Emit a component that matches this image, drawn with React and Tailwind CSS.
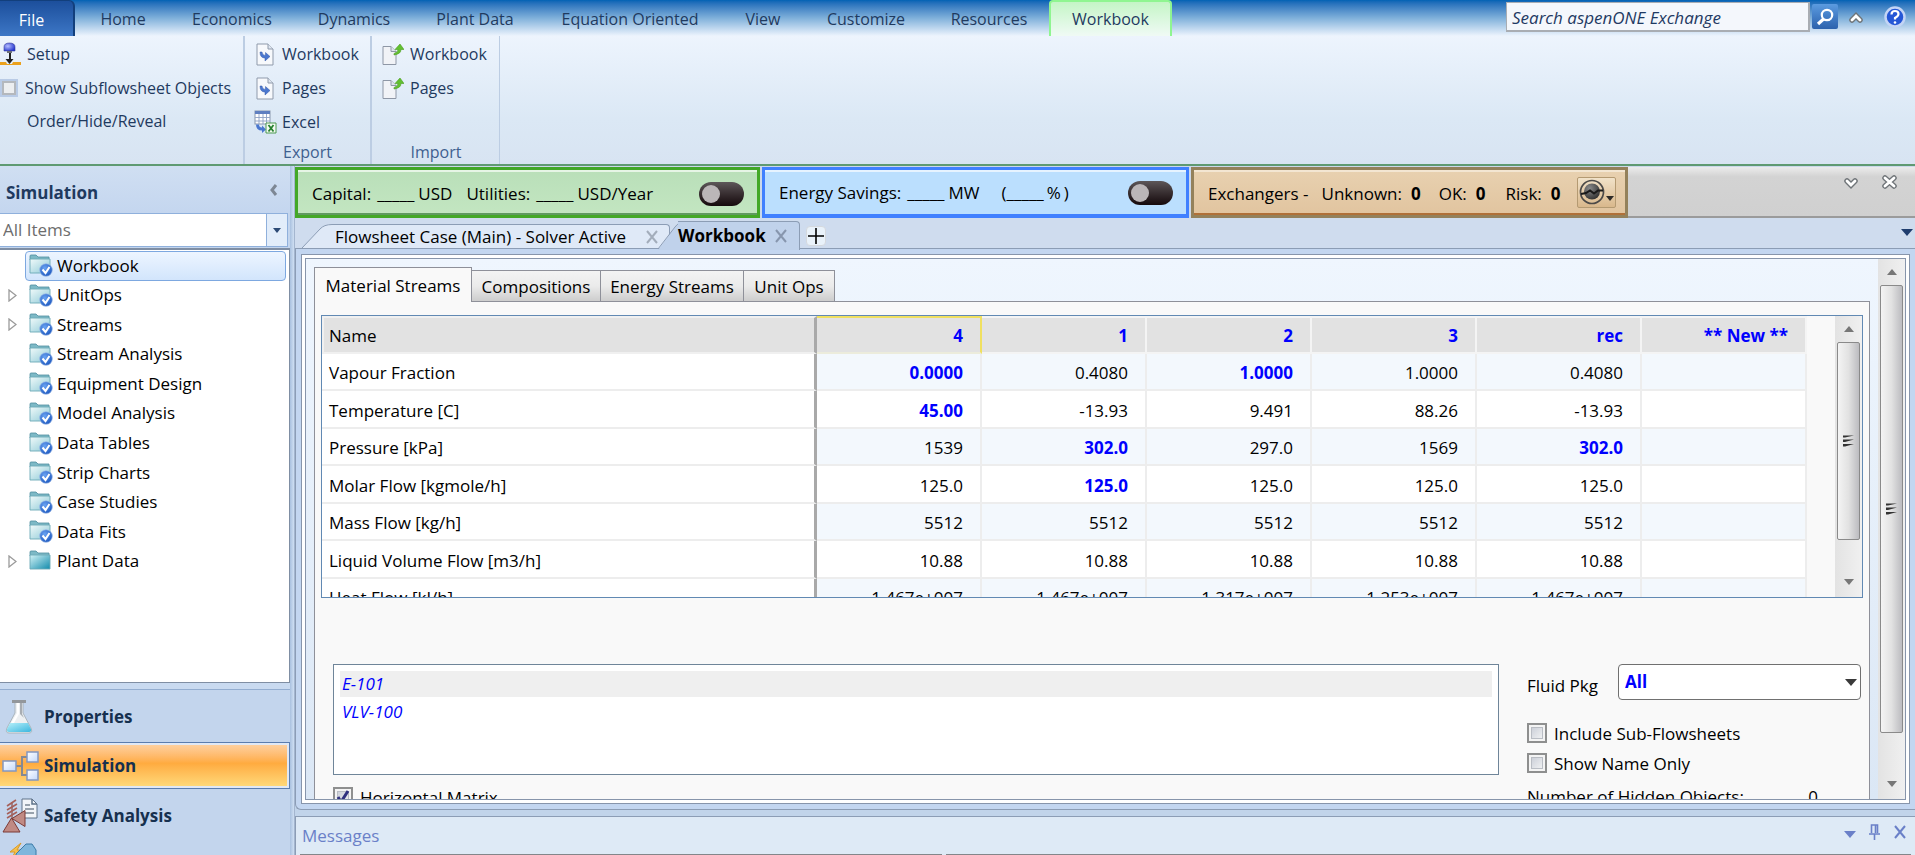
import { useState } from "react";

const ribbonTabs = [
  { name: "Home", width: "w-[92px]" },
  { name: "Economics", width: "w-[126px]" },
  { name: "Dynamics", width: "w-[118px]" },
  { name: "Plant Data", width: "w-[124px]" },
  { name: "Equation Oriented", width: "w-[186px]" },
  { name: "View", width: "w-[80px]" },
  { name: "Customize", width: "w-[126px]" },
  { name: "Resources", width: "w-[120px]" },
];

const treeItems = [
  { name: "Workbook", selected: true },
  { name: "UnitOps", expandable: true },
  { name: "Streams", expandable: true },
  { name: "Stream Analysis" },
  { name: "Equipment Design" },
  { name: "Model Analysis" },
  { name: "Data Tables" },
  { name: "Strip Charts" },
  { name: "Case Studies" },
  { name: "Data Fits" },
  { name: "Plant Data", expandable: true, plain: true },
];

const columns = ["4", "1", "2", "3", "rec", "** New **"];

// values that start with "!" are user specified and drawn in blue
const rows = [
  ["Vapour Fraction", "!0.0000", "0.4080", "!1.0000", "1.0000", "0.4080", ""],
  ["Temperature [C]", "!45.00", "-13.93", "9.491", "88.26", "-13.93", ""],
  ["Pressure [kPa]", "1539", "!302.0", "297.0", "1569", "!302.0", ""],
  ["Molar Flow [kgmole/h]", "125.0", "!125.0", "125.0", "125.0", "125.0", ""],
  ["Mass Flow [kg/h]", "5512", "5512", "5512", "5512", "5512", ""],
  ["Liquid Volume Flow [m3/h]", "10.88", "10.88", "10.88", "10.88", "10.88", ""],
  [
    "Heat Flow [kJ/h]",
    "-1.467e+007",
    "-1.467e+007",
    "-1.317e+007",
    "-1.253e+007",
    "-1.467e+007",
    "",
  ],
];

function SetupIcon() {
  return (
    <svg width="22" height="24" viewBox="0 0 22 24" className="shrink-0">
      <defs>
        <radialGradient id="bulb" cx=".35" cy=".4" r=".7">
          <stop offset="0" stopColor="#b4bcff" />
          <stop offset="1" stopColor="#2233cc" />
        </radialGradient>
      </defs>
      <path d="M5 9V5q0-4 5.500-4T16 5v4z" fill="url(#bulb)" stroke="#3a3f9a" strokeWidth=".6" />
      <path d="M8 9h5v2H8z" fill="#6d7078" />
      <path d="M10 11h2v7h-2z" fill="#222" />
      <path d="M6.500 17h8L10.500 22z" fill="#222" />
      <path d="M0 20h7l1 2h5l1-2h8v3H0z" fill="#eba11c" />
    </svg>
  );
}

function ExportPageIcon() {
  return (
    <svg width="18" height="23" viewBox="0 0 18 23">
      <path d="M1 1h11l5 5v16H1z" fill="#f7f9fc" stroke="#8f9aab" />
      <path d="M12 1v5h5" fill="#dfe6f0" stroke="#8f9aab" />
      <path d="M4 9q0 6 5 6v3l5-4.500L9.500 9.500v3Q6.500 12.500 6 9z" fill="#4a77cf" stroke="#3459a8" strokeWidth=".5" />
    </svg>
  );
}

function ImportPageIcon() {
  return (
    <svg width="22" height="22" viewBox="0 0 22 22" className="shrink-0">
      <path d="M1 3.500h8l5 5v13H1z" fill="#f1f3f7" stroke="#8e97a6" />
      <path d="M9 3.500v5h5" fill="#dfe4ec" stroke="#8e97a6" />
      <path d="M12 10.500q4-1 4-4h-3l5-5.500 4 5.500h-3q0 4.500-7 5.500z" fill="#62c030" stroke="#4d9c22" strokeWidth=".6" />
    </svg>
  );
}

function ExcelIcon() {
  return (
    <svg width="23" height="24" viewBox="0 0 23 24" className="shrink-0">
      <rect x="1" y="1" width="15" height="13" fill="#fff" stroke="#8a97ad" />
      <rect x="1" y="1" width="15" height="3" fill="#5f7fc0" />
      <path d="M1 7.500h15M1 11h15M5 4v10M9 4v10M12.500 4v10" stroke="#8fa2c4" strokeWidth=".9" />
      <path d="M2 14.500h3q0 3 3 3v-2l4 4-4 3.500v-2.500q-6 0-6-6z" fill="#4a77cf" />
      <path d="M12 13h10v10H12z" fill="#f4faf2" stroke="#4c9a50" />
      <path d="M14.500 15l5 6.500M19.500 15l-5 6.500" stroke="#26802c" strokeWidth="1.800" />
    </svg>
  );
}

function FolderIcon({ plain }) {
  return (
    <svg width="24" height="23" viewBox="0 0 24 23" className="shrink-0">
      <defs>
        <linearGradient id="folder" x1="0" y1="0" x2="1" y2="1">
          <stop offset="0" stopColor="#f1fafa" />
          <stop offset="1" stopColor="#8cc9d6" />
        </linearGradient>
        <linearGradient id="folderDark" x1="0" y1="0" x2="1" y2="1">
          <stop offset="0" stopColor="#d3f3f6" />
          <stop offset="1" stopColor="#128bac" />
        </linearGradient>
        <radialGradient id="badge" cx=".4" cy=".35" r=".7">
          <stop offset="0" stopColor="#6ba4f2" />
          <stop offset="1" stopColor="#1a55be" />
        </radialGradient>
      </defs>
      <path d="M1 2q0-1 1-1h5l2 2h11v3H1z" fill="#7db9c6" stroke="#4e8d9e" strokeWidth=".8" />
      <path
        d="M1 5h20v14H1z"
        fill={plain ? "url(#folderDark)" : "url(#folder)"}
        stroke="#6ba9b7"
        strokeWidth=".9"
      />
      {!plain && (
        <>
          <circle cx="17" cy="16" r="6.300" fill="url(#badge)" stroke="#9dbbe8" strokeWidth=".7" />
          <path d="M13.500 15.500l3 3.500 4-6" fill="none" stroke="#fff" strokeWidth="2" />
        </>
      )}
    </svg>
  );
}

function FlaskIcon() {
  return (
    <svg width="30" height="34" viewBox="0 0 30 34">
      <defs>
        <linearGradient id="water" x1="0" y1="0" x2="1" y2="1">
          <stop offset="0" stopColor="#b6f0fa" />
          <stop offset="1" stopColor="#3bb6de" />
        </linearGradient>
      </defs>
      <path d="M11 2v11L3 28q-2 5 2 5h20q4 0 2-5L19 13V2z" fill="#edf0f2" stroke="#aab4bc" />
      <path d="M6 23h18l3 6q1 3-2 3H5q-3 0-2-3z" fill="url(#water)" />
      <path d="M13 3h2v11l-5 9H7l6-10z" fill="#fff" />
      <path d="M16 3h2v11l2 4-4-4z" fill="#a8adb2" />
      <rect x="8" y="0" width="14" height="3" fill="#93979b" />
    </svg>
  );
}

function SimulationIcon() {
  return (
    <svg width="38" height="30" viewBox="0 0 38 30">
      <defs>
        <linearGradient id="block" x1="0" y1="0" x2="1" y2="1">
          <stop offset="0" stopColor="#fff" />
          <stop offset="1" stopColor="#c3d8fb" />
        </linearGradient>
      </defs>
      <path d="M14 15h6M26 6h-6v18h6" fill="none" stroke="#858993" strokeWidth="2" />
      <g fill="url(#block)" stroke="#8397c0" strokeWidth="1.500">
        <rect x="1" y="10" width="13" height="10" />
        <rect x="25" y="1" width="11" height="10" />
        <rect x="25" y="19" width="11" height="10" />
      </g>
    </svg>
  );
}

function SafetyIcon() {
  return (
    <svg width="37" height="36" viewBox="0 0 37 36">
      <path d="M20 1h10l5 5v14H20z" fill="#f2f5f9" stroke="#5f7389" />
      <path d="M30 1v5h5" fill="none" stroke="#5f7389" strokeWidth="1.500" />
      <path d="M23 7h5M23 11h9M23 15h9" stroke="#7b8794" strokeWidth="1.500" />
      <path d="M10 22V4" stroke="#8a4a45" strokeWidth="1.200" />
      <path d="M5 20l10-6M5 16l10-6M5 12l10-6M5 8l9-6" stroke="#a5605a" strokeWidth="1.600" />
      <path d="M9.500 20L1 34h17z" fill="#c08a84" stroke="#7c3b37" />
      <path d="M10 20.500l13-8v16z" fill="#c08a84" stroke="#7c3b37" />
    </svg>
  );
}

function EnergyIcon() {
  return (
    <svg width="32" height="32" viewBox="0 0 32 32">
      <path d="M13 1L2 10h5L2 20 14 8H9z" fill="#f6c04a" stroke="#d79a2a" />
      <path d="M8 12L18 2h6l4 6v20H10z" fill="#7fb6dc" stroke="#3a7ba8" />
    </svg>
  );
}

function ExchangerIcon() {
  return (
    <svg width="35" height="27" viewBox="0 0 35 27" className="shrink-0">
      <defs>
        <radialGradient id="ball" cx=".35" cy=".3" r=".8">
          <stop offset="0" stopColor="#8a8a8a" />
          <stop offset="1" stopColor="#2b2b2b" />
        </radialGradient>
      </defs>
      <circle cx="13" cy="13" r="11.500" fill="none" stroke="#4c4a48" strokeWidth="1.700" />
      <circle cx="13" cy="12.500" r="8" fill="url(#ball)" />
      <path d="M2 15l5-1 4-2.500 4 3 4-3h5" fill="none" stroke="#1a1a1a" strokeWidth="2" />
      <path d="M27 17h8l-4 5z" fill="#2d2a28" />
    </svg>
  );
}

function Triangle({ className = "" }) {
  return (
    <svg width="12" height="7" viewBox="0 0 12 7" className={className}>
      <path d="M0 0h12L6 7z" fill="currentColor" />
    </svg>
  );
}

function Cross({ className = "" }) {
  return (
    <svg width="14" height="14" viewBox="0 0 14 14" className={className}>
      <path d="M2 1l10 12M12 1L2 13" stroke="currentColor" strokeWidth="2" />
    </svg>
  );
}

// white glyph with a grey rim, used by the small window controls
function OutlinedGlyph({ d, width, height }) {
  return (
    <svg width={width} height={height} viewBox={`0 0 ${width} ${height}`} fill="none">
      <path d={d} stroke="#6f7478" strokeWidth="5.500" strokeLinecap="round" />
      <path d={d} stroke="#fff" strokeWidth="2.800" strokeLinecap="round" />
    </svg>
  );
}

function CheckBox({ id, label, checked = false }) {
  const [on, setOn] = useState(checked);
  return (
    <div className="flex h-[30px] items-center gap-[7px]">
      <span className="grid">
        <input
          id={id}
          type="checkbox"
          checked={on}
          onChange={(e) => setOn(e.target.checked)}
          className="col-start-1 row-start-1 h-5 w-5 appearance-none border-2 border-[#8e8f8f] bg-linear-to-br from-[#c3c8d2] to-[#f9f9f9] shadow-[inset_0_0_0_2px_#f4f4f4,inset_0_0_0_3px_#b9bdc4]"
        />
        {on && (
          <svg
            width="20"
            height="20"
            viewBox="0 0 20 20"
            className="pointer-events-none col-start-1 row-start-1"
          >
            <path d="M5 10l3 5 7-11" fill="none" stroke="#30317f" strokeWidth="3" />
          </svg>
        )}
      </span>
      <label htmlFor={id} className="pt-[2px]">
        {label}
      </label>
    </div>
  );
}

function RibbonButton({ icon, children }) {
  return (
    <button className="flex h-[34px] items-center gap-[7px]">
      <span className="flex w-5 justify-center">{icon}</span>
      {children}
    </button>
  );
}

function RibbonTabs() {
  return (
    <div className="flex h-9 shrink-0 bg-linear-to-b from-[#0062b4] via-[#7fb0da] via-50% to-[#edf4fd]">
      <button className="w-[75px] rounded-tr-md border-t border-r-2 border-[#123f7c] bg-linear-to-b from-[#1c4f9c] to-[#3d77c6] pt-[2px] pr-[10px] text-white">
        File
      </button>
      <nav className="flex pl-[2px]">
        {ribbonTabs.map((tab) => (
          <button key={tab.name} className={`${tab.width} pt-[2px] whitespace-nowrap`}>
            {tab.name}
          </button>
        ))}
        <button className="w-[123px] rounded-t border-x-2 border-t-2 border-[#8ff591] bg-linear-to-b from-[#c4f5c6] to-[#f0faf5]">
          Workbook
        </button>
      </nav>
      <div className="ml-auto flex items-start">
        <input
          aria-label="Search"
          placeholder="Search aspenONE Exchange"
          className="mt-[2px] h-[30px] w-[304px] border border-r-2 border-b-2 border-[#a9adb3] bg-[#f4f7fc] px-[5px] pt-[2px] text-[17px] italic placeholder:text-[#1f3a63]"
        />
        <button
          aria-label="Go"
          className="mt-1 ml-[2px] flex h-[25px] w-[26px] items-center justify-center rounded-xs bg-linear-to-b from-[#5b9be0] to-[#2c62ad]"
        >
          <svg width="18" height="18" viewBox="0 0 18 18">
            <circle cx="11" cy="7" r="5.200" fill="none" stroke="#fff" strokeWidth="2.200" />
            <path d="M7.500 11L2 16" stroke="#fff" strokeWidth="3.200" />
          </svg>
        </button>
        <button aria-label="Collapse ribbon" className="mt-[11px] ml-[10px]">
          <OutlinedGlyph d="M4 9l4-4 4 4" width={16} height={13} />
        </button>
        <button aria-label="Help" className="mt-[6px] mr-[9px] ml-5">
          <svg width="22" height="22" viewBox="0 0 22 22">
            <circle cx="11" cy="11" r="9.500" fill="#2557d6" stroke="#c3d4f5" strokeWidth="2.500" />
            <path d="M7.500 8.500q0-3.500 3.500-3.500t3.500 3q0 2-3.500 4v1.500" fill="none" stroke="#fff" strokeWidth="2.200" />
            <circle cx="11" cy="16.500" r="1.300" fill="#fff" />
          </svg>
        </button>
      </div>
    </div>
  );
}

function Ribbon() {
  return (
    <div className="flex h-[130px] shrink-0 border-b-2 border-[#5f9a72] bg-linear-to-b from-[#edf4fd] via-[#dbe8f5] via-65% to-[#d8e4f2]">
      <div className="flex w-[245px] flex-col items-start border-r-2 border-[#bccde3] pt-[1px]">
        <RibbonButton icon={<SetupIcon />}>Setup</RibbonButton>
        <div className="flex h-[34px] items-center gap-[7px]">
          <input
            id="show-sub"
            type="checkbox"
            className="h-[18px] w-[18px] appearance-none border-2 border-[#b9cbe6] bg-[#eceef0] shadow-[inset_0_0_0_2px_#b4b8bd]"
          />
          <label htmlFor="show-sub" className="whitespace-nowrap">
            Show Subflowsheet Objects
          </label>
        </div>
        <button className="h-8 pl-[27px]">Order/Hide/Reveal</button>
      </div>
      <div className="flex w-[127px] flex-col items-start border-r-2 border-[#bccde3] pt-[1px] pl-[10px]">
        <RibbonButton icon={<ExportPageIcon />}>Workbook</RibbonButton>
        <RibbonButton icon={<ExportPageIcon />}>Pages</RibbonButton>
        <RibbonButton icon={<ExcelIcon />}>Excel</RibbonButton>
        <div className="mt-auto w-full pr-[10px] text-center text-[#3f5f8f]">Export</div>
      </div>
      <div className="flex w-[128px] flex-col items-start border-r border-[#bccde3] pt-[1px] pl-[11px]">
        <RibbonButton icon={<ImportPageIcon />}>Workbook</RibbonButton>
        <RibbonButton icon={<ImportPageIcon />}>Pages</RibbonButton>
        <div className="mt-auto w-full pr-[10px] text-center text-[#3f5f8f]">Import</div>
      </div>
    </div>
  );
}

function Sidebar() {
  return (
    <aside className="flex w-[290px] shrink-0 flex-col bg-[#c3d5ed]">
      <div className="flex h-[47px] items-center justify-between bg-linear-to-b from-[#d0dff2] to-[#c4d6ef] pt-[6px] pr-3 pl-[6px]">
        <h2 className="font-bold text-[#1f3a5f]">Simulation</h2>
        <button aria-label="Hide pane" className="pb-[6px]">
          <svg width="9" height="12" viewBox="0 0 9 12">
            <path d="M7 1L3 6l4 5" fill="none" stroke="#7d8794" strokeWidth="3" />
          </svg>
        </button>
      </div>
      <div className="mr-[2px] flex h-[34px] border border-l-0 border-[#8fb0dc] bg-white">
        <input
          aria-label="Filter"
          defaultValue="All Items"
          className="min-w-0 flex-1 pl-[3px] text-[#6d6d6d]"
        />
        <button
          aria-label="Open filter list"
          className="flex w-[21px] items-center justify-center border-l border-[#8fb0dc] bg-[#e2edfa] text-[#2c4a75]"
        >
          <svg width="8" height="5" viewBox="0 0 8 5">
            <path d="M0 0h8L4 5z" fill="currentColor" />
          </svg>
        </button>
      </div>
      <div className="mt-[1px] flex-1 border border-t-2 border-l-0 border-[#7f8ea3] bg-white">
        <ul className="mt-[1px] grid h-[325px] auto-rows-fr">
          {treeItems.map((item) => (
            <li key={item.name} className="flex items-center">
              <span className="flex w-[25px] justify-center">
                {item.expandable && (
                  <svg width="9" height="13" viewBox="0 0 9 13">
                    <path d="M1 1v11l7-5.500z" fill="#fff" stroke="#9b9b9b" strokeWidth="1.300" />
                  </svg>
                )}
              </span>
              <button
                className={`mr-[3px] flex h-full flex-1 items-center gap-1 rounded-sm border pl-[3px] ${
                  item.selected
                    ? "border-[#7da8e0] bg-linear-to-b from-[#edf5ff] to-[#d2e5fc]"
                    : "border-transparent"
                }`}
              >
                <FolderIcon plain={item.plain} />
                {item.name}
              </button>
            </li>
          ))}
        </ul>
      </div>
      <div className="mb-[1px] h-[7px] border-b border-[#93add0] bg-[#c9daf0]" />
      <div className="flex h-[164px] shrink-0 flex-col overflow-hidden font-bold text-[#16304f]">
        <button className="flex h-[51px] shrink-0 items-center">
          <span className="flex w-11 pl-1">
            <FlaskIcon />
          </span>
          Properties
        </button>
        <button className="flex h-[47px] shrink-0 items-center border border-l-0 border-[#5b7dae] bg-linear-to-b from-[#fdd3a6] via-[#ffab3f] via-45% to-[#ffdc7c] shadow-[inset_-2px_0_0_#dfe8f5,inset_0_2px_0_#dfe8f5,inset_0_-2px_0_#dfe8f5]">
          <span className="flex w-11 pl-[2px]">
            <SimulationIcon />
          </span>
          Simulation
        </button>
        <button className="flex h-[53px] shrink-0 items-center">
          <span className="flex w-11 pl-[2px]">
            <SafetyIcon />
          </span>
          Safety Analysis
        </button>
        <button className="flex h-[51px] shrink-0" aria-label="Energy Analysis">
          <span className="flex w-11 pl-2">
            <EnergyIcon />
          </span>
        </button>
      </div>
    </aside>
  );
}

function PowerSwitch({ label }) {
  return (
    <input
      type="checkbox"
      role="switch"
      aria-label={label}
      className="ml-auto flex h-6 w-[45px] appearance-none items-center rounded-full bg-linear-to-b from-[#5d5759] to-[#150a0d] px-[3px] before:h-[18px] before:w-[18px] before:rounded-full before:bg-[#bbb6b8] before:content-['']"
    />
  );
}

function Dashboard() {
  return (
    <div className="flex h-[52px] shrink-0 gap-[2px] bg-[#cbd8ea] pt-[1px] whitespace-nowrap text-black">
      <section className="flex w-[465px] items-center border-3 border-[#43a827] bg-linear-to-b from-[#b9dfb9] to-[#c3e6c1] pt-[2px] pr-[13px] pl-[14px] shadow-[inset_0_2px_0_#e6f5e6,inset_0_-2px_0_#5f9a60]">
        <span>Capital:</span>
        <span className="ml-[6px]">_____</span>
        <span className="ml-1">USD</span>
        <span className="ml-[14px]">Utilities:</span>
        <span className="ml-[6px]">_____</span>
        <span className="ml-1">USD/Year</span>
        <PowerSwitch label="Economics" />
      </section>
      <section className="flex w-[427px] items-center border-3 border-b-4 border-[#4080ff] bg-[#bbdffe] pt-[2px] pr-[13px] pl-[14px] shadow-[inset_0_2px_0_#e6f3ff]">
        <span>Energy Savings:</span>
        <span className="ml-[6px]">_____</span>
        <span className="ml-1">MW</span>
        <span className="ml-[22px]">(</span>
        <span>_____</span>
        <span className="ml-[3px]">%</span>
        <span className="ml-[3px]">)</span>
        <PowerSwitch label="Energy" />
      </section>
      <section className="flex w-[437px] items-center border-3 border-[#94815b] bg-linear-to-b from-[#e8d1b0] to-[#e1c49f] pt-[2px] pr-[9px] pl-[14px] shadow-[inset_0_2px_0_#f3e6d2,inset_0_-2px_0_#b07038]">
        <span>Exchangers -</span>
        <span className="ml-[13px]">Unknown:</span>
        <b className="ml-[9px]">0</b>
        <span className="ml-[18px]">OK:</span>
        <b className="ml-[9px]">0</b>
        <span className="ml-[20px]">Risk:</span>
        <b className="ml-[9px]">0</b>
        <button
          aria-label="Exchanger options"
          className="mb-[2px] ml-auto flex h-[31px] w-[39px] items-center justify-center rounded-xs border border-[#b49a72] bg-linear-to-b from-[#f1e2c9] to-[#d9b88c]"
        >
          <ExchangerIcon />
        </button>
      </section>
      <div className="-ml-[2px] flex flex-1 items-start justify-end gap-[22px] border-b-2 border-[#9b9b9b] bg-linear-to-b from-[#ececec] via-[#d3d3d3] via-20% to-[#d0d0d0] pt-2 pr-[17px]">
        <button aria-label="Collapse dashboard" className="pt-[2px]">
          <OutlinedGlyph d="M4 4l4 4 4-4" width={16} height={13} />
        </button>
        <button aria-label="Close dashboard">
          <OutlinedGlyph d="M4 3l9 8M13 3l-9 8" width={17} height={14} />
        </button>
      </div>
    </div>
  );
}

function DocumentTabs() {
  return (
    <div className="flex h-[31px] shrink-0 items-end border-b border-[#8c9db5] bg-[#cfdcee] pl-[7px] text-black">
      <div className="flex h-[24px] items-stretch">
        <svg width="30" height="24" viewBox="0 0 30 24">
          <path d="M0 24L18 5q4-5 12-5v24z" fill="#dfe9f7" />
          <path d="M0 24L18 5q4-4.500 12-4.500" fill="none" stroke="#8c9db5" />
        </svg>
        <button className="flex items-center gap-[19px] rounded-tr border-t border-r border-[#8c9db5] bg-[#dfe9f7] pr-[10px] pl-[3px] whitespace-nowrap">
          Flowsheet Case (Main) - Solver Active
          <Cross className="text-[#a3adbb]" />
        </button>
      </div>
      <div className="relative -mb-[2px] -ml-3 flex h-[29px] items-stretch">
        <svg width="28" height="29" viewBox="0 0 28 29">
          <path d="M0 29L17 6q4-6 11-6v29z" fill="#c0d2eb" />
          <path d="M0 28L17 6q4-5.500 11-5.500" fill="none" stroke="#8c9db5" />
        </svg>
        <button className="-ml-2 flex items-center gap-2 rounded-tr border-t border-r border-[#8c9db5] bg-[#c0d2eb] pr-[11px] font-bold">
          Workbook
          <Cross className="text-[#8796ae]" />
        </button>
      </div>
      <button
        aria-label="New tab"
        className="mb-[2px] ml-[6px] flex h-5 w-5 items-center justify-center rounded border border-[#d5d9de] bg-[#e9f2fa]"
      >
        <svg width="16" height="16" viewBox="0 0 16 16" className="shrink-0">
          <path d="M8 0v16M0 8h16" stroke="#000" strokeWidth="1.600" />
        </svg>
      </button>
      <button aria-label="Open tabs" className="mr-[2px] mb-3 ml-auto text-[#1f3d6e]">
        <Triangle />
      </button>
    </div>
  );
}

function ScrollBar({ thumb, className }) {
  return (
    <div
      className={`flex shrink-0 flex-col items-center bg-linear-to-r from-[#e3e3e3] to-[#f0f0f0] text-[#777] ${className}`}
    >
      <button aria-label="Scroll up" className="flex h-[26px] shrink-0 items-center">
        <svg width="10" height="6" viewBox="0 0 10 6">
          <path d="M0 6h10L5 0z" fill="currentColor" />
        </svg>
      </button>
      <div
        className={`flex w-[23px] items-center justify-center rounded-xs border border-[#8a8a8a] bg-linear-to-r from-[#f4f4f4] via-[#e2e2e2] via-50% to-[#bcbcc0] ${thumb}`}
      >
        <svg width="11" height="12" viewBox="0 0 11 12">
          <path d="M0 .5h11L2 2.500H0zM0 4.500h11L2 7H0zM0 9h11L2 11.500H0z" fill="#333" />
        </svg>
      </div>
      <button aria-label="Scroll down" className="mt-auto flex h-[30px] shrink-0 items-center">
        <svg width="10" height="6" viewBox="0 0 10 6">
          <path d="M0 0h10L5 6z" fill="currentColor" />
        </svg>
      </button>
    </div>
  );
}

function StreamTable() {
  return (
    <div className="flex h-[283px] overflow-hidden border border-[#6189b3]">
      <div className="min-w-0 flex-1 pr-7">
        <table className="w-full table-fixed border-separate border-spacing-0">
          <thead>
            <tr className="h-[38px] bg-[#e2e2e2]">
              <th className="border-t-2 border-r-3 border-b-2 border-l-2 border-[#f0f0f0] border-r-[#a9a9a9] p-0 pt-[2px] pl-[5px] text-left font-normal">
                Name
              </th>
              {columns.map((name, i) => (
                <th
                  key={name}
                  className={`w-[165px] border-r-2 border-b-2 p-0 pt-[2px] pr-[17px] text-right font-bold text-[#0000fe] ${
                    i === 0
                      ? "border-t-2 border-[#f0e060] border-b-[#ececdc]"
                      : "border-t-2 border-[#f4f4f4]"
                  }`}
                >
                  {name}
                </th>
              ))}
            </tr>
          </thead>
          <tbody>
            {rows.map(([label, ...values]) => (
              <tr key={label} className="group h-[37px] even:h-[38px]">
                <td className="overflow-hidden border-r-3 border-b-2 border-[#ededed] border-r-[#a9a9a9] bg-white p-0 pt-[3px] pl-[7px]">
                  {label}
                </td>
                {values.map((value, i) => (
                  <td
                    key={i}
                    className={`border-r-2 border-b-2 border-[#ededed] p-0 pt-[3px] pr-[17px] text-right group-odd:bg-[#f3f8fd] group-even:bg-white ${
                      value.startsWith("!") ? "font-bold text-[#0000fe]" : ""
                    }`}
                  >
                    {value.replace("!", "")}
                  </td>
                ))}
              </tr>
            ))}
          </tbody>
        </table>
      </div>
      <ScrollBar thumb="h-[198px]" className="w-[27px]" />
    </div>
  );
}

function Workbook() {
  return (
    <div className="flex min-h-0 flex-1 flex-col overflow-hidden bg-linear-to-b from-[#eff6fe] to-[#dbe7f5] px-2 pt-2">
      <div className="relative -mb-px flex shrink-0 items-end whitespace-nowrap">
        <button className="h-[35px] w-[158px] border border-b-0 border-[#8e9099] bg-[#f9f9f9] pt-[1px]">
          Material Streams
        </button>
        <button className="h-8 w-[129px] border border-l-0 border-[#8e9099] bg-linear-to-b from-[#f3f3f3] via-[#ebebeb] via-50% to-[#cdcdcd] pt-[2px]">
          Compositions
        </button>
        <button className="h-8 w-[143px] border border-l-0 border-[#8e9099] bg-linear-to-b from-[#f3f3f3] via-[#ebebeb] via-50% to-[#cdcdcd] pt-[2px]">
          Energy Streams
        </button>
        <button className="h-8 w-[91px] border border-l-0 border-[#8e9099] bg-linear-to-b from-[#f3f3f3] via-[#ebebeb] via-50% to-[#cdcdcd] pt-[2px]">
          Unit Ops
        </button>
      </div>
      <div className="min-h-0 flex-1 overflow-hidden border border-b-0 border-[#8e9099] bg-[#f9f9f9] px-[6px] pt-[13px]">
        <StreamTable />
        <div className="mt-[66px] flex">
          <div className="ml-3 flex-1">
            <ul className="h-[111px] border border-[#6f8599] bg-white p-[6px] text-[#0000fe] italic">
              <li className="h-[26px] bg-[#efefef] pl-[2px] leading-[26px]">E-101</li>
              <li className="h-[30px] pl-[2px] leading-[30px]">VLV-100</li>
            </ul>
            <div className="pt-[7px]">
              <CheckBox id="horizontal" label="Horizontal Matrix" checked />
            </div>
          </div>
          <div className="ml-7 w-[336px]">
            <div className="flex h-[36px] items-center justify-between pr-[2px]">
              <label htmlFor="fluid-pkg" className="pt-[7px]">
                Fluid Pkg
              </label>
              <div className="grid w-[243px] items-center">
                <select
                  id="fluid-pkg"
                  className="col-start-1 row-start-1 h-[36px] appearance-none rounded border border-[#707070] bg-white pl-[6px] font-bold text-[#0000fe]"
                >
                  <option>All</option>
                </select>
                <Triangle className="pointer-events-none col-start-1 row-start-1 mr-1 justify-self-end text-[#3a3a3a]" />
              </div>
            </div>
            <div className="pt-[18px]">
              <CheckBox id="include-sub" label="Include Sub-Flowsheets" />
              <CheckBox id="name-only" label="Show Name Only" />
            </div>
            <div className="flex justify-between pt-[7px] pr-[45px] leading-6">
              <span>Number of Hidden Objects:</span>
              <span>0</span>
            </div>
          </div>
        </div>
      </div>
    </div>
  );
}

function Messages() {
  return (
    <section className="mt-[6px] h-[39px] shrink-0 overflow-hidden border-t border-l border-[#8c9db5] bg-[#deeaf6] text-[#6a80c8]">
      <div className="flex h-[37px] items-center justify-between pr-[8px] pl-[6px]">
        <h2>Messages</h2>
        <div className="flex items-center gap-[13px] pb-2">
          <button aria-label="Window position" className="pt-[6px]">
            <Triangle />
          </button>
          <button aria-label="Auto hide">
            <svg width="11" height="16" viewBox="0 0 11 16">
              <path
                d="M2.500 9V1h6v8M6.500 1v8M0 10h11M5.500 10v6"
                fill="none"
                stroke="currentColor"
                strokeWidth="1.600"
              />
            </svg>
          </button>
          <button aria-label="Close messages">
            <Cross />
          </button>
        </div>
      </div>
      <div className="mx-1 flex gap-1">
        <div className="h-[2px] w-[642px] bg-[#83868a]" />
        <div className="h-[2px] flex-1 bg-[#83868a]" />
      </div>
    </section>
  );
}

export default function App() {
  return (
    <div className="flex h-screen flex-col overflow-hidden bg-[#c3d5ed] font-['Open_Sans','Noto_Sans',sans-serif] text-[17px] leading-6 text-[#1f3a5f]">
      <header className="shrink-0 text-[16px]">
        <RibbonTabs />
        <Ribbon />
      </header>
      <div className="flex min-h-0 flex-1 text-black">
        <Sidebar />
        <div className="w-[5px] border-r border-[#a4b6cf] bg-linear-to-r from-[#a9c1df] to-[#cfdff2]" />
        <main className="flex min-w-0 flex-1 flex-col bg-[#c1d4ea]">
          <Dashboard />
          <DocumentTabs />
          <div className="flex min-h-0 flex-1 flex-col rounded-bl-md border-b border-l border-[#8c9db5] bg-[#c3d6f0] p-[5px]">
            <div className="flex min-h-0 flex-1 border border-[#8795ab] bg-white p-[3px]">
              <div className="flex min-w-0 flex-1 border border-[#8795ab]">
                <Workbook />
                <ScrollBar thumb="h-[448px]" className="w-[27px]" />
              </div>
            </div>
          </div>
          <Messages />
        </main>
      </div>
    </div>
  );
}
